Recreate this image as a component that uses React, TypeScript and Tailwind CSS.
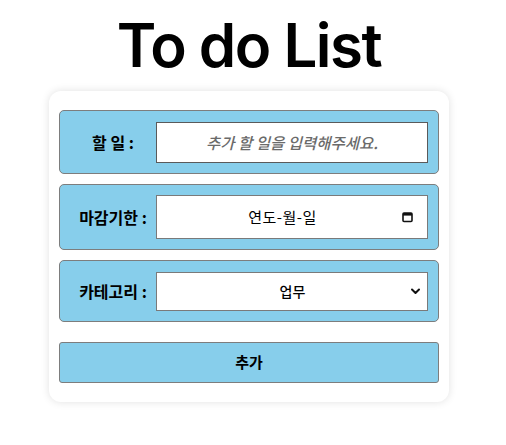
import React from 'react';

const kr = "font-['Noto_Sans_CJK_KR','Noto_Sans',sans-serif]";

const Row: React.FC<{ label: string; children: React.ReactNode; className?: string }> = ({ label, children, className }) => (
    <div className={`flex items-center rounded-[5px] border border-[#7d7d7d] bg-[#87ceeb] px-[10px] ${className ?? ''}`}>
        <div className="w-[86px] shrink-0 text-center text-[16px] font-bold text-black">{label}</div>
        <div className="flex-1">{children}</div>
    </div>
);

const CalendarIcon = () => (
    <svg width="11" height="12" viewBox="0 0 11 12" className="shrink-0">
        <rect x="1" y="2" width="9" height="8.5" rx="1" fill="none" stroke="#111" strokeWidth="1.6" />
        <rect x="1" y="2" width="9" height="2.6" fill="#111" />
    </svg>
);

const ChevronIcon = () => (
    <svg width="11" height="12" viewBox="0 0 11 12" className="shrink-0">
        <path d="M2 4.5 L5.5 8 L9 4.5" fill="none" stroke="#111" strokeWidth="2" strokeLinecap="round" strokeLinejoin="round" />
    </svg>
);

export default function App() {
    return (
        <div className={`min-h-[445px] w-[498px] bg-white ${kr}`}>
            <h1 className="pt-[9px] text-center font-['Inter',sans-serif] text-[60px] font-semibold leading-[72px] tracking-[-1.5px] text-black">
                To do List
            </h1>
            <div className="mx-auto mt-[10px] w-[400px] rounded-[12px] bg-white px-[10px] pt-[19px] pb-[19px] shadow-[0_0_8px_rgba(0,0,0,0.12)]">
                <div className="flex flex-col gap-[10px]">
                    <Row label="할 일 :" className="h-[64px]">
                        <input
                            type="text"
                            placeholder="추가 할 일을 입력해주세요."
                            className={`h-[41px] w-full border border-[#5a5a5a] bg-white px-2 text-center text-[15.5px] font-medium italic outline-none placeholder:text-[#6a6a6a] ${kr}`}
                        />
                    </Row>
                    <Row label="마감기한 :" className="h-[66px]">
                        <div className="flex h-[44px] w-full items-center border border-[#7a7a7a] bg-white pl-[6px] pr-[14px] text-[15px] text-black">
                            <span className="flex-1 text-center tracking-[0.5px]">연도-월-일</span>
                            <CalendarIcon />
                        </div>
                    </Row>
                    <Row label="카테고리 :" className="h-[62px]">
                        <div className="flex h-[39px] w-full items-center border border-[#7a7a7a] bg-white pl-[18px] pr-[6px] text-[14px] font-medium text-black">
                            <span className="flex-1 text-center">업무</span>
                            <ChevronIcon />
                        </div>
                    </Row>
                </div>
                <button className="mt-[20px] flex h-[41px] w-full items-center justify-center rounded-[3px] border border-[#7d7d7d] bg-[#87ceeb] text-[15px] font-bold text-black">
                    추가
                </button>
            </div>
        </div>
    );
}
